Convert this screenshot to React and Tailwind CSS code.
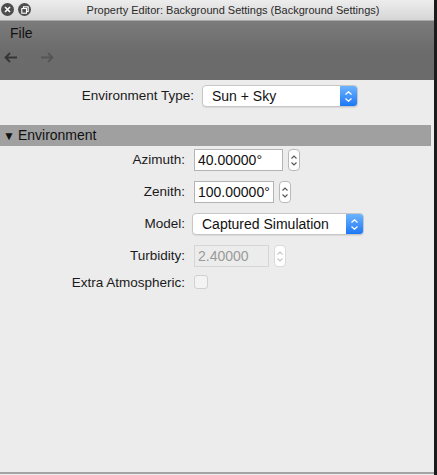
import React from 'react';

const font = { fontFamily: '"Liberation Sans", Arial, sans-serif' };

function Stepper({ disabled }) {
  const c = disabled ? '#c4c4c4' : '#555';
  return (
    <div
      className={`w-[12px] h-[22px] rounded-[4px] border bg-white flex flex-col items-center justify-center gap-[3px] ${
        disabled ? 'border-[#dadada]' : 'border-[#b9b9b9]'
      }`}
    >
      <svg width="6" height="4" viewBox="0 0 6 4">
        <path d="M0.5 3.5 L3 1 L5.5 3.5" fill="none" stroke={c} strokeWidth="1.1" />
      </svg>
      <svg width="6" height="4" viewBox="0 0 6 4">
        <path d="M0.5 0.5 L3 3 L5.5 0.5" fill="none" stroke={c} strokeWidth="1.1" />
      </svg>
    </div>
  );
}

function Select({ value, width }) {
  return (
    <div
      className="h-[22px] flex rounded-[4px] border border-[#c6c6c6] bg-white overflow-hidden shadow-[0_1px_1px_rgba(0,0,0,0.08)]"
      style={{ width }}
    >
      <div className="flex-1 pl-[9px] text-[14px] leading-[20px] text-[#111]">{value}</div>
      <div className="w-[17px] bg-gradient-to-b from-[#6cb3ff] to-[#1877f6] flex flex-col items-center justify-center gap-[3px]">
        <svg width="7" height="4" viewBox="0 0 7 4">
          <path d="M0.5 3.5 L3.5 0.8 L6.5 3.5" fill="none" stroke="#fff" strokeWidth="1.3" />
        </svg>
        <svg width="7" height="4" viewBox="0 0 7 4">
          <path d="M0.5 0.5 L3.5 3.2 L6.5 0.5" fill="none" stroke="#fff" strokeWidth="1.3" />
        </svg>
      </div>
    </div>
  );
}

function NumField({ value, width, disabled }) {
  return (
    <div className="flex items-center gap-[5px]">
      <div
        className={`h-[22px] border pl-[3px] text-[14px] leading-[20px] ${
          disabled ? 'border-[#d6d6d6] bg-[#ececec] text-[#9a9a9a]' : 'border-[#b4b4b4] bg-white text-[#111]'
        }`}
        style={{ width }}
      >
        {value}
      </div>
      <Stepper disabled={disabled} />
    </div>
  );
}

function Row({ label, children }) {
  return (
    <div className="flex items-center h-[22px]">
      <div className="w-[186px] text-right pr-[1px] text-[13.5px] text-[#1a1a1a]">{label}</div>
      <div className="pl-[8px]">{children}</div>
    </div>
  );
}

export default function App() {
  return (
    <div className="w-[437px] h-[475px] flex bg-[#1b1b1b] overflow-hidden" style={font}>
      <div className="w-[434px] h-full flex flex-col bg-[#ececec]">
        {/* title bar */}
        <div className="h-[21px] relative flex items-center bg-gradient-to-b from-[#ededed] to-[#d6d6d6] border-b border-[#a9a9a9]">
          <div className="absolute left-[1px] top-[3px] w-[13px] h-[13px] rounded-full bg-[#4d4d4d] flex items-center justify-center">
            <svg width="7" height="7" viewBox="0 0 7 7">
              <path d="M1 1 L6 6 M6 1 L1 6" stroke="#fff" strokeWidth="1.6" />
            </svg>
          </div>
          <div className="absolute left-[18px] top-[3px] w-[13px] h-[13px] rounded-full bg-[#4d4d4d] flex items-center justify-center">
            <svg width="8" height="8" viewBox="0 0 8 8">
              <rect x="2.5" y="0.8" width="4.7" height="4.7" fill="none" stroke="#fff" strokeWidth="1.1" />
              <rect x="0.8" y="2.5" width="4.7" height="4.7" fill="#4d4d4d" stroke="#fff" strokeWidth="1.1" />
            </svg>
          </div>
          <div className="w-full text-center pl-[32px] text-[11px] text-[#2a2a2a]">
            Property Editor: Background Settings (Background Settings)
          </div>
        </div>

        {/* menu + toolbar */}
        <div className="h-[59px] bg-gradient-to-b from-[#7b7b7b] via-[#6c6c6c] to-[#6b6b6b] flex flex-col">
          <div className="pl-[10px] pt-[2px] text-[14px] text-[#111] leading-[20px]">File</div>
          <div className="flex items-center gap-[22px] pl-[4px] pt-[9px]">
            <svg width="14" height="11" viewBox="0 0 14 11">
              <path d="M13 5.5 H2 M6 1 L1.5 5.5 L6 10" fill="none" stroke="#363636" strokeWidth="1.8" />
            </svg>
            <svg width="14" height="11" viewBox="0 0 14 11">
              <path d="M1 5.5 H12 M8 1 L12.5 5.5 L8 10" fill="none" stroke="#555" strokeWidth="1.8" />
            </svg>
          </div>
        </div>

        {/* environment type */}
        <div className="flex items-center h-[22px] mt-[5px]">
          <div className="w-[194px] text-right text-[13.5px] text-[#1a1a1a]">Environment Type:</div>
          <div className="pl-[8px]">
            <Select value="Sun + Sky" width={156} />
          </div>
        </div>

        {/* section header */}
        <div className="mt-[18px] mr-[3px] h-[21px] bg-[#a0a0a0] flex items-center pl-[3px] text-[14px] text-[#111]">
          <span className="text-[12px] mr-[3px]">▼</span>Environment
        </div>

        <div className="flex flex-col gap-[10px] pt-[3px]">
          <Row label="Azimuth:">
            <NumField value="40.00000°" width={89} />
          </Row>
          <Row label="Zenith:">
            <NumField value="100.00000°" width={80} />
          </Row>
          <Row label="Model:">
            <div className="-ml-[2px]">
              <Select value="Captured Simulation" width={172} />
            </div>
          </Row>
          <Row label="Turbidity:">
            <NumField value="2.40000" width={75} disabled />
          </Row>
          <div className="-mt-[5px]">
            <Row label="Extra Atmospheric:">
              <div className="w-[14px] h-[14px] rounded-[3px] border border-[#d0d0d0] bg-[#f3f3f3] mt-[-3px]" />
            </Row>
          </div>
        </div>

        <div className="flex-1" />
        <div className="h-[2px] bg-[#a3a3a3] mb-[1px]" />
      </div>
    </div>
  );
}
